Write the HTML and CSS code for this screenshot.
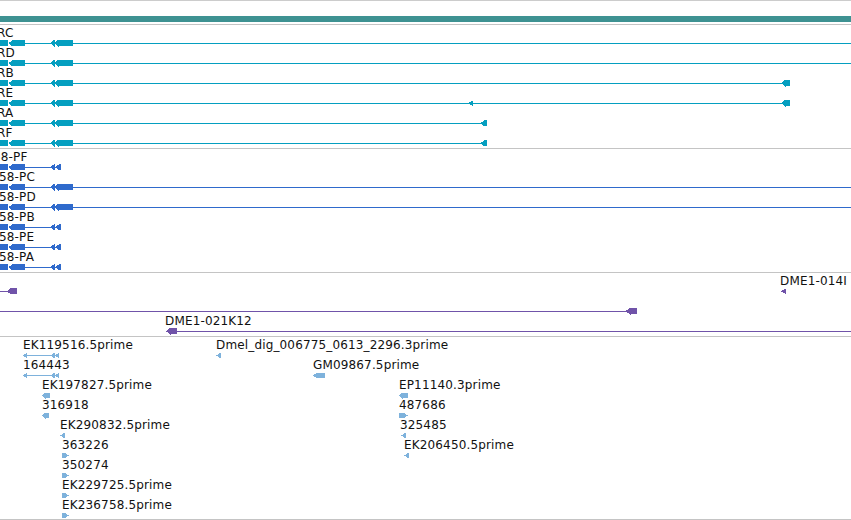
FILE: index.html
```html
<!DOCTYPE html>
<html>
<head>
<meta charset="utf-8">
<link rel="stylesheet" href="styles.css">
</head>
<body>
<svg class="defs" width="0" height="0">
  <defs>
    <g id="gStart">
      <rect x="0" y="1" width="8" height="6"/>
      <polygon points="8.5,4.2 13,0.7 13,7.7"/>
      <rect x="13" y="1" width="12" height="6"/>
      <rect x="25" y="4" width="25" height="1"/>
    </g>
    <g id="gLong">
      <polygon points="50,4.2 54.5,0.7 54.5,7.7"/>
      <polygon points="54,4.2 58.5,0.7 58.5,7.7"/>
      <rect x="58" y="1" width="15" height="6"/>
    </g>
    <g id="gShort">
      <polygon points="50,4.2 55,0.7 55,7.7"/>
      <polygon points="55,4.2 60,0.7 60,7.7"/>
      <rect x="59.5" y="1" width="1.5" height="6"/>
    </g>
    <g id="eLong">
      <polygon points="0,4.5 4,1.5 4,7.5"/>
      <rect x="4" y="4" width="23" height="1"/>
      <polygon points="27,4.5 31.5,1.5 31.5,7.5"/>
      <polygon points="31.5,4.5 36,1.5 36,7.5"/>
    </g>
    <polygon id="eTiny" points="0,4.5 5,1.5 5,7.5"/>
  </defs>
</svg>

<div class="ruler"><div class="ruler-bar"></div></div>

<div class="track cyan">
  <div class="row">
    <span class="lbl" style="left:-3px">RC</span>
    <svg class="glyph" width="851" height="9"><use href="#gStart"/><use href="#gLong"/><rect x="73" y="4" width="778" height="1"/></svg>
  </div>
  <div class="row">
    <span class="lbl" style="left:-3px">RD</span>
    <svg class="glyph" width="851" height="9"><use href="#gStart"/><use href="#gLong"/><rect x="73" y="4" width="778" height="1"/></svg>
  </div>
  <div class="row">
    <span class="lbl" style="left:-3px">RB</span>
    <svg class="glyph" width="851" height="9"><use href="#gStart"/><use href="#gLong"/><rect x="73" y="4" width="710" height="1"/><polygon points="781,4.2 785.5,0.7 785.5,7.7"/><rect x="785" y="1" width="5" height="6"/></svg>
  </div>
  <div class="row">
    <span class="lbl" style="left:-3px">RE</span>
    <svg class="glyph" width="851" height="9"><use href="#gStart"/><use href="#gLong"/><rect x="73" y="4" width="710" height="1"/><polygon points="468,4.3 473,1.5 473,7"/><polygon points="781,4.2 785.5,0.7 785.5,7.7"/><rect x="785" y="1" width="5" height="6"/></svg>
  </div>
  <div class="row">
    <span class="lbl" style="left:-3px">RA</span>
    <svg class="glyph" width="851" height="9"><use href="#gStart"/><use href="#gLong"/><rect x="73" y="4" width="409" height="1"/><polygon points="480.5,4.2 485,0.7 485,7.7"/><rect x="484.5" y="1" width="2.5" height="6"/></svg>
  </div>
  <div class="row">
    <span class="lbl" style="left:-3px">RF</span>
    <svg class="glyph" width="851" height="9"><use href="#gStart"/><use href="#gLong"/><rect x="73" y="4" width="409" height="1"/><polygon points="480.5,4.2 485,0.7 485,7.7"/><rect x="484.5" y="1" width="2.5" height="6"/></svg>
  </div>
</div>

<div class="track blue">
  <div class="row">
    <span class="lbl" style="left:-7px">58-PF</span>
    <svg class="glyph" width="851" height="9"><use href="#gStart"/><use href="#gShort"/></svg>
  </div>
  <div class="row">
    <span class="lbl" style="left:-1px">58-PC</span>
    <svg class="glyph" width="851" height="9"><use href="#gStart"/><use href="#gLong"/><rect x="73" y="4" width="778" height="1"/></svg>
  </div>
  <div class="row">
    <span class="lbl" style="left:-1px">58-PD</span>
    <svg class="glyph" width="851" height="9"><use href="#gStart"/><use href="#gLong"/><rect x="73" y="4" width="778" height="1"/></svg>
  </div>
  <div class="row">
    <span class="lbl" style="left:-1px">58-PB</span>
    <svg class="glyph" width="851" height="9"><use href="#gStart"/><use href="#gShort"/></svg>
  </div>
  <div class="row">
    <span class="lbl" style="left:-1px">58-PE</span>
    <svg class="glyph" width="851" height="9"><use href="#gStart"/><use href="#gShort"/></svg>
  </div>
  <div class="row">
    <span class="lbl" style="left:-1px">58-PA</span>
    <svg class="glyph" width="851" height="9"><use href="#gStart"/><use href="#gShort"/></svg>
  </div>
</div>

<div class="track purple">
  <div class="row">
    <svg class="glyph" width="851" height="9"><rect x="0" y="4" width="8" height="1"/><polygon points="7,4.2 11,0.7 11,7.7"/><rect x="10.5" y="1" width="6.5" height="6"/><polygon points="781,4.3 786,1.3 786,7.3"/></svg>
    <span class="lbl" style="left:780px">DME1-014I</span>
  </div>
  <div class="row">
    <svg class="glyph" width="851" height="9"><rect x="0" y="4" width="627" height="1"/><polygon points="625.5,4.2 630.5,0.7 630.5,7.7"/><rect x="630" y="1" width="7" height="6"/></svg>
  </div>
  <div class="row">
    <span class="lbl" style="left:165px">DME1-021K12</span>
    <svg class="glyph" width="851" height="9"><polygon points="166,4.2 170.5,0.7 170.5,7.7"/><rect x="170" y="1" width="6.5" height="6"/><rect x="176" y="4" width="675" height="1"/></svg>
  </div>
</div>

<div class="track est">
  <div class="row">
    <div class="feat" style="left:23px"><span class="lbl">EK119516.5prime</span><svg class="glyph" width="37" height="9"><use href="#eLong"/></svg></div>
    <div class="feat" style="left:216px"><span class="lbl">Dmel_dig_006775_0613_2296.3prime</span><svg class="glyph" width="6" height="9"><use href="#eTiny"/></svg></div>
  </div>
  <div class="row">
    <div class="feat" style="left:23px"><span class="lbl">164443</span><svg class="glyph" width="37" height="9"><use href="#eLong"/></svg></div>
    <div class="feat" style="left:313px"><span class="lbl">GM09867.5prime</span><svg class="glyph" width="12" height="9"><polygon points="0,4.5 4,1.5 4,7.5"/><rect x="3.5" y="2" width="8.5" height="5"/></svg></div>
  </div>
  <div class="row">
    <div class="feat" style="left:42px"><span class="lbl">EK197827.5prime</span><svg class="glyph" width="8" height="9"><polygon points="0,4.5 3.5,1.5 3.5,7.5"/><rect x="3" y="2" width="5" height="5"/></svg></div>
    <div class="feat" style="left:399px"><span class="lbl">EP11140.3prime</span><svg class="glyph" width="9" height="9"><polygon points="0,4.5 3.5,1.5 3.5,7.5"/><rect x="3" y="2" width="6" height="5"/></svg></div>
  </div>
  <div class="row">
    <div class="feat" style="left:42px"><span class="lbl">316918</span><svg class="glyph" width="7" height="9"><polygon points="0,4.5 3.5,1.5 3.5,7.5"/><rect x="3" y="2" width="4" height="5"/></svg></div>
    <div class="feat" style="left:399px"><span class="lbl">487686</span><svg class="glyph" width="9" height="9"><polygon points="0,2 5,2 9,4.5 5,7 0,7"/></svg></div>
  </div>
  <div class="row">
    <div class="feat" style="left:60px"><span class="lbl">EK290832.5prime</span><svg class="glyph" width="6" height="9"><use href="#eTiny"/></svg></div>
    <div class="feat" style="left:401px"><span class="lbl lbl-back">325485</span><svg class="glyph" width="6" height="9"><use href="#eTiny"/></svg></div>
  </div>
  <div class="row">
    <div class="feat" style="left:62px"><span class="lbl">363226</span><svg class="glyph" width="7" height="9"><polygon points="0,2 3,2 7,4.5 3,7 0,7"/></svg></div>
    <div class="feat" style="left:404px"><span class="lbl">EK206450.5prime</span><svg class="glyph" width="5" height="9"><polygon points="0,4.5 4.5,1.5 4.5,7.5"/></svg></div>
  </div>
  <div class="row">
    <div class="feat" style="left:62px"><span class="lbl">350274</span><svg class="glyph" width="7" height="9"><polygon points="0,2 3,2 7,4.5 3,7 0,7"/></svg></div>
  </div>
  <div class="row">
    <div class="feat" style="left:62px"><span class="lbl">EK229725.5prime</span><svg class="glyph" width="7" height="9"><polygon points="0,2 3,2 7,4.5 3,7 0,7"/></svg></div>
  </div>
  <div class="row">
    <div class="feat" style="left:62px"><span class="lbl">EK236758.5prime</span><svg class="glyph" width="7" height="9"><polygon points="0,2 3,2 7,4.5 3,7 0,7"/></svg></div>
  </div>
</div>
</body>
</html>
```

FILE: styles.css
```css
html, body {
  margin: 0;
  padding: 0;
  background: #ffffff;
}

body {
  width: 851px;
  height: 520px;
  overflow: hidden;
  font-family: "DejaVu Sans", "Liberation Sans", sans-serif;
  color: #111111;
}

.defs {
  display: block;
  width: 0;
  height: 0;
}

.ruler {
  border-top: 1px solid #cccccc;
  border-bottom: 1px solid #c4c4c4;
  padding-top: 15px;
  height: 8px;
}

.ruler-bar {
  height: 6px;
  background: #3e9292;
}

.track {
  border-bottom: 1px solid #c4c4c4;
  padding-bottom: 3px;
}

.track.est {
  padding-bottom: 2px;
}

.cyan { color: #059fc0; }
.blue { color: #2f6acc; }
.purple { color: #7053a9; }
.est { color: #7eb2dc; }

.row {
  position: relative;
  height: 20px;
}

.feat {
  position: absolute;
  top: 0;
  height: 20px;
}

.lbl {
  position: absolute;
  top: 1px;
  left: 0;
  font-size: 12px;
  line-height: 14px;
  letter-spacing: 0.15px;
  white-space: nowrap;
  color: #111111;
}

.lbl-back {
  left: -1px;
}

.glyph {
  position: absolute;
  top: 14px;
  left: 0;
  display: block;
  overflow: visible;
  fill: currentColor;
  shape-rendering: crispEdges;
}
```
